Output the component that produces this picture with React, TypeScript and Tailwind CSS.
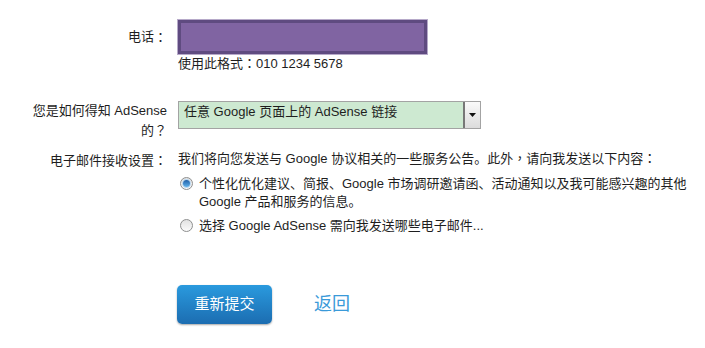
import React from 'react'

const FONT = '"Liberation Sans", "Noto Sans CJK SC", sans-serif'

// full-width punctuation in the shot sits centred in its box, as in the TC cut
function P({ c }: { c: string }) {
  return <span className="font-['Noto_Sans_CJK_TC',sans-serif]">{c}</span>
}

function Radio({ checked }: { checked?: boolean }) {
  return (
    <span className="relative mt-[2px] inline-flex h-[13px] w-[13px] shrink-0 items-center justify-center rounded-full border border-[#8e8f8f] bg-gradient-to-b from-[#e2e2e2] to-[#fbfbfb]">
      {checked && (
        <span className="h-[7px] w-[7px] rounded-full bg-gradient-to-b from-[#1f5fa7] to-[#62b3ec] shadow-[0_0_0_1px_#b9d7f0]" />
      )}
    </span>
  )
}

export default function App() {
  return (
    <div className="min-h-screen w-[705px] bg-white text-[13px] text-[#1e1e1e]" style={{ fontFamily: FONT }}>
      <div className="pt-[20px] pl-[27px]">
        {/* phone */}
        <div className="flex items-start">
          <div className="flex h-[34px] w-[140px] items-center justify-end">电话<P c="：" /></div>
          <div className="ml-[11px]">
            <div className="h-[34px] w-[249px] border-[3px] border-[#5f4b80] bg-[#8064a2] shadow-[0_0_0_1px_#b6a9c9]" />
            <div className="mt-[1px] leading-[16px]">使用此格式<P c="：" />010 1234 5678</div>
          </div>
        </div>

        {/* source */}
        <div className="mt-[29px] flex items-start">
          <div className="w-[140px] text-right leading-[19px]">
            <div>您是如何得知 AdSense</div>
            <div>的<P c="？" /></div>
          </div>
          <div className="ml-[11px] flex h-[28px] w-[303px] border border-[#a3a3a3] bg-[#cde9d1]">
            <div className="flex-1 pl-[5px] pt-[1px] leading-[18px]">任意 Google 页面上的 AdSense 链接</div>
            <div className="flex w-[17px] items-center justify-center border-l-2 border-[#777] bg-gradient-to-b from-[#fafafa] to-[#dcdcdc]">
              <svg width="7" height="4" viewBox="0 0 7 4">
                <path d="M0 0h7L3.5 4z" fill="#111" />
              </svg>
            </div>
          </div>
        </div>

        {/* email */}
        <div className="mt-[9px] flex items-start">
          <div className="w-[140px] pt-[2px] text-right leading-[18px]">电子邮件接收设置<P c="：" /></div>
          <div className="ml-[11px] w-[510px]">
            <div className="leading-[18px]">
              我们将向您发送与 Google 协议相关的一些服务公告。此外<P c="，" />请向我发送以下内容<P c="：" />
            </div>
            <div className="mt-[7px] ml-[2px] flex items-start gap-[6px] leading-[18px]">
              <Radio checked />
              <span>个性化优化建议、简报、Google 市场调研邀请函、活动通知以及我可能感兴趣的其他 Google 产品和服务的信息。</span>
            </div>
            <div className="mt-[6px] ml-[2px] flex items-start gap-[6px] leading-[18px]">
              <Radio />
              <span>选择 Google AdSense 需向我发送哪些电子邮件...</span>
            </div>
          </div>
        </div>

        {/* actions */}
        <div className="mt-[50px] flex items-center pl-[150px]">
          <button className="h-[39px] w-[95px] rounded-[5px] bg-gradient-to-b from-[#2a9ade] to-[#1c6db1] text-[15px] text-white shadow-[0_1px_2px_rgba(0,0,0,0.35)]">
            重新提交
          </button>
          <a className="ml-[42px] text-[18px] text-[#3a9ad9]">返回</a>
        </div>
      </div>
    </div>
  )
}
